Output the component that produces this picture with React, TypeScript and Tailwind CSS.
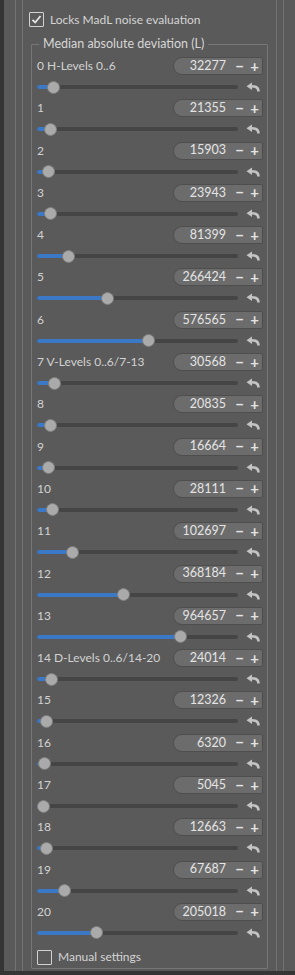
import type { ReactNode } from 'react';

const rows: { label: string; value: string; thumb: number }[] = [
  { label: '0 H-Levels 0..6', value: '32277', thumb: 53 },
  { label: '1', value: '21355', thumb: 50 },
  { label: '2', value: '15903', thumb: 48 },
  { label: '3', value: '23943', thumb: 50 },
  { label: '4', value: '81399', thumb: 68 },
  { label: '5', value: '266424', thumb: 107 },
  { label: '6', value: '576565', thumb: 148 },
  { label: '7 V-Levels 0..6/7-13', value: '30568', thumb: 54 },
  { label: '8', value: '20835', thumb: 50 },
  { label: '9', value: '16664', thumb: 48 },
  { label: '10', value: '28111', thumb: 52 },
  { label: '11', value: '102697', thumb: 72 },
  { label: '12', value: '368184', thumb: 123 },
  { label: '13', value: '964657', thumb: 180 },
  { label: '14 D-Levels 0..6/14-20', value: '24014', thumb: 51 },
  { label: '15', value: '12326', thumb: 46 },
  { label: '16', value: '6320', thumb: 44 },
  { label: '17', value: '5045', thumb: 43 },
  { label: '18', value: '12663', thumb: 46 },
  { label: '19', value: '67687', thumb: 64 },
  { label: '20', value: '205018', thumb: 96 },
];

// track starts at x=37 in the reference
const TRACK_X = 37;

function ResetIcon() {
  return (
    <svg width="15" height="10" viewBox="0 0 15 10" className="shrink-0">
      <path d="M13.5 9.5 C13.5 6 11 4.2 6.5 4.2" fill="none" stroke="#c4c4c4" strokeWidth="2.6" />
      <path d="M7 0.5 L1.5 4.2 L7 7.9 Z" fill="#c4c4c4" />
    </svg>
  );
}

function Checkbox({ checked, children }: { checked?: boolean; children: ReactNode }) {
  return (
    <div className="flex items-center gap-[6px]">
      <div className="w-[15px] h-[15px] border-[1.5px] border-[#d2d2d2] rounded-[1px] flex items-center justify-center">
        {checked && (
          <svg width="11" height="11" viewBox="0 0 11 11">
            <path d="M1.5 5.8 L4.2 8.5 L9.5 2" fill="none" stroke="#e6e6e6" strokeWidth="1.8" />
          </svg>
        )}
      </div>
      <span className="text-[12px] text-[#d4d4d4] leading-none">{children}</span>
    </div>
  );
}

function SliderRow({ label, value, thumb }: { label: string; value: string; thumb: number }) {
  const offset = thumb - TRACK_X;
  return (
    <div className="h-[42.3px]">
      <div className="h-[18px] flex items-center justify-between">
        <span className="text-[12px] text-[#d2d2d2] leading-none">{label}</span>
        <div className="w-[90px] h-[18px] flex items-center rounded-l-[9px] rounded-r-[2px] bg-[#6c6c6c] border border-[#4e4e4e] text-[#e4e4e4]">
          <span className="flex-1 text-right pr-[6px] text-[12.5px] leading-none">{value}</span>
          <span className="w-[15px] text-center text-[15px] font-bold leading-none">−</span>
          <span className="w-[15px] text-center text-[15px] font-bold leading-none">+</span>
        </div>
      </div>
      <div className="h-[24px] flex items-center">
        <div className="relative w-[201px] h-[13px] flex items-center">
          <div className="w-full h-[4px] rounded-full bg-[#454545]">
            <div className="h-full rounded-full bg-[#3b78c6]" style={{ width: offset }} />
          </div>
          <div
            className="absolute top-0 w-[13px] h-[13px] rounded-full bg-[#aaaaaa] border border-[#7e7e7e]"
            style={{ left: offset - 6.5 }}
          />
        </div>
        <div className="ml-[7px]">
          <ResetIcon />
        </div>
      </div>
    </div>
  );
}

export default function App() {
  return (
    <div
      className="w-[295px] h-[975px] bg-[#5a5a5a] flex flex-col overflow-hidden"
      style={{ fontFamily: 'Lato, "Noto Sans", sans-serif' }}
    >
      <div className="h-[971px] flex">
        <div className="w-[4px] bg-[#353535]" />
        <div className="w-[11px]" />
        {/* outer panel */}
        <div className="w-[269px] border-x border-[#737373] px-[6px]">
          {/* inner panel */}
          <div className="h-full border-x border-[#737373]">
            <div className="pl-[6px] pt-[12px] h-[36px]">
              <Checkbox checked>Locks MadL noise evaluation</Checkbox>
            </div>
            <fieldset className="mx-[8px] w-[237px] border border-[#777777] rounded-[1px] pl-[5px] pr-[4px] h-[933px] overflow-hidden">
              <legend className="ml-[2px] px-[4px] text-[12.5px] text-[#d6d6d6] leading-[16px]">
                Median absolute deviation (L)
              </legend>
              <div className="pt-[5px]">
                {rows.map((r) => (
                  <SliderRow key={r.label} {...r} />
                ))}
              </div>
              <div className="h-[24px] flex items-center">
                <Checkbox>Manual settings</Checkbox>
              </div>
            </fieldset>
          </div>
        </div>
        <div className="w-[11px]" />
      </div>
      <div className="h-[4px] bg-[#353535]" />
    </div>
  );
}
